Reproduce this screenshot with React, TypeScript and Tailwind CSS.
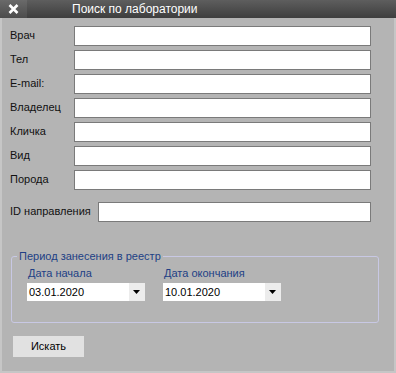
import React from 'react';

// Окно "Поиск по лаборатории" в стиле старого WinForms
const FIELDS = ['Врач', 'Тел', 'E-mail:', 'Владелец', 'Кличка', 'Вид', 'Порода'];

const DateBox: React.FC<{ label: string; value: string }> = ({ label, value }) => (
  <div className="flex flex-col w-[118px]">
    <span className="text-[11px] leading-[13px] text-[#213f85] pl-[1px]">{label}</span>
    <div className="mt-[3px] h-[18px] bg-white flex items-center">
      <span className="flex-1 pl-[2px] text-[11px] text-black">{value}</span>
      <div className="w-[16px] h-full bg-[#ececec] flex items-center justify-center">
        <svg width="8" height="4" viewBox="0 0 8 4">
          <path d="M0 0 H7 L3.5 4 Z" fill="#000" />
        </svg>
      </div>
    </div>
  </div>
);

const App: React.FC = () => {
  return (
    <div className="w-[396px] h-[373px] flex flex-col bg-[#c6c6c6] font-['Liberation_Sans',Arial,sans-serif]">
      {/* заголовок */}
      <div className="h-[18px] flex items-center bg-gradient-to-b from-[#5e5e5e] to-[#3e3e3e]">
        <div className="w-[27px] h-full flex items-center justify-center bg-gradient-to-b from-[#6a6a6a] to-[#4c4c4c]">
          <svg width="11" height="10" viewBox="0 0 11 10">
            <path d="M1.5 1 L9.5 9 M9.5 1 L1.5 9" stroke="#fff" strokeWidth="2.6" />
          </svg>
        </div>
        <span className="ml-[45px] text-[12px] text-white">Поиск по лаборатории</span>
      </div>

      <div className="flex-1 mx-[2px] mb-[2px] bg-[#b4b4b4] flex flex-col">
        <div className="flex flex-col gap-[4px] pt-[8px] pl-[8px]">
          {FIELDS.map(f => (
            <div key={f} className="flex items-center h-[20px]">
              <span className="w-[64px] text-[11px] text-[#111] -mt-[2px]">{f}</span>
              <input className="w-[297px] h-[20px] bg-white border border-[#7a7a7a] outline-none" />
            </div>
          ))}
          <div className="flex items-center h-[20px] mt-[8px]">
            <span className="w-[88px] text-[11px] text-[#111] -mt-[2px]">ID направления</span>
            <input className="w-[273px] h-[20px] bg-white border border-[#7a7a7a] outline-none" />
          </div>
        </div>

        <fieldset className="ml-[9px] mt-[28px] w-[368px] h-[73px] border border-[#c8c8e4] rounded-[3px] pl-[15px]">
          <legend className="-ml-[10px] px-[2px] text-[11px] leading-[13px] text-[#213f85]">Период занесения в реестр</legend>
          <div className="flex gap-[18px] mt-[4px]">
            <DateBox label="Дата начала" value="03.01.2020" />
            <DateBox label="Дата окончания" value="10.01.2020" />
          </div>
        </fieldset>

        <button className="ml-[11px] mt-[13px] w-[71px] h-[21px] bg-[#e1e1e1] text-[11px] text-black">Искать</button>
      </div>
    </div>
  );
};

export default App;
